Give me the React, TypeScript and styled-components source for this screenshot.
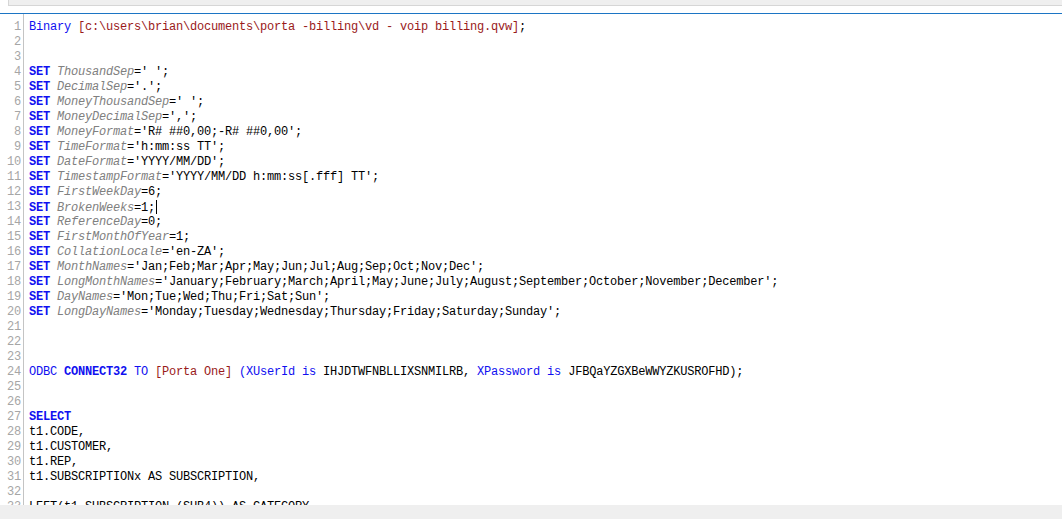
import React from 'react';
import styled, { createGlobalStyle } from 'styled-components';

type Kind = 'kw' | 'fn' | 'var' | 'str' | 'txt';
type Token = [Kind, string];

const GlobalStyle = createGlobalStyle`
  html, body {
    margin: 0;
    padding: 0;
    background: #ffffff;
  }
  #root {
    height: 100vh;
  }
`;

const Page = styled.div`
  display: flex;
  flex-direction: column;
  height: 100vh;
  overflow: hidden;
  background: #ffffff;
`;

const TopStrip = styled.div`
  height: 5px;
  margin-left: 8px;
  background: #efefef;
  border-left: 1px solid #d6d6d6;
  border-bottom: 1px solid #d6d6d6;
`;

const Editor = styled.div`
  flex: 1;
  display: flex;
  margin-top: 7px;
  border-top: 1px solid #1c75c4;
  overflow: hidden;
  font-family: 'Liberation Mono', 'Courier New', monospace;
  font-size: 12px;
  letter-spacing: -0.2px;
  line-height: 15px;
`;

const Gutter = styled.div`
  width: 21px;
  padding: 6px 2px 0 0;
  border-right: 1px solid #c4c4c4;
  color: #a6a6a6;
  text-align: right;
  flex-shrink: 0;
`;

const LineNo = styled.div`
  height: 15px;
`;

const Code = styled.div`
  padding: 6px 0 0 5px;
  flex: 1;
  white-space: pre;
  color: #000000;
`;

const Line = styled.div`
  height: 15px;
`;

const Tok = styled.span<{ $kind: Kind }>`
  color: ${({ $kind }) =>
    $kind === 'kw' || $kind === 'fn'
      ? '#1010f0'
      : $kind === 'var'
      ? '#808080'
      : $kind === 'str'
      ? '#9a1a1a'
      : '#000000'};
  font-weight: ${({ $kind }) => ($kind === 'kw' ? 700 : 400)};
  font-style: ${({ $kind }) => ($kind === 'var' ? 'italic' : 'normal')};
`;

const Caret = styled.span`
  display: inline-block;
  width: 1px;
  height: 14px;
  margin-left: 1px;
  vertical-align: -3px;
  background: #000000;
`;

const BottomStrip = styled.div`
  height: 14px;
  background: #efefef;
  flex-shrink: 0;
`;

const set = (name: string, value: string): Token[] => [
  ['kw', 'SET '],
  ['var', name],
  ['txt', '=' + value + ';'],
];

const lines: Token[][] = [
  [
    ['fn', 'Binary '],
    ['str', '[c:\\users\\brian\\documents\\porta -billing\\vd - voip billing.qvw]'],
    ['txt', ';'],
  ],
  [],
  [],
  set('ThousandSep', "' '"),
  set('DecimalSep', "'.'"),
  set('MoneyThousandSep', "' '"),
  set('MoneyDecimalSep', "','"),
  set('MoneyFormat', "'R# ##0,00;-R# ##0,00'"),
  set('TimeFormat', "'h:mm:ss TT'"),
  set('DateFormat', "'YYYY/MM/DD'"),
  set('TimestampFormat', "'YYYY/MM/DD h:mm:ss[.fff] TT'"),
  set('FirstWeekDay', '6'),
  set('BrokenWeeks', '1'),
  set('ReferenceDay', '0'),
  set('FirstMonthOfYear', '1'),
  set('CollationLocale', "'en-ZA'"),
  set('MonthNames', "'Jan;Feb;Mar;Apr;May;Jun;Jul;Aug;Sep;Oct;Nov;Dec'"),
  set(
    'LongMonthNames',
    "'January;February;March;April;May;June;July;August;September;October;November;December'"
  ),
  set('DayNames', "'Mon;Tue;Wed;Thu;Fri;Sat;Sun'"),
  set('LongDayNames', "'Monday;Tuesday;Wednesday;Thursday;Friday;Saturday;Sunday'"),
  [],
  [],
  [],
  [
    ['fn', 'ODBC '],
    ['kw', 'CONNECT32'],
    ['fn', ' TO '],
    ['str', '[Porta One]'],
    ['fn', ' (XUserId is '],
    ['txt', 'IHJDTWFNBLLIXSNMILRB, '],
    ['fn', 'XPassword is '],
    ['txt', 'JFBQaYZGXBeWWYZKUSROFHD);'],
  ],
  [],
  [],
  [['kw', 'SELECT']],
  [['txt', 't1.CODE,']],
  [['txt', 't1.CUSTOMER,']],
  [['txt', 't1.REP,']],
  [['txt', 't1.SUBSCRIPTIONx AS SUBSCRIPTION,']],
  [],
  [['txt', 'LEFT(t1.SUBSCRIPTION,(SUB4)) AS CATEGORY']],
];

// the text cursor sits at the end of line 13
const CARET_LINE = 12;

const App: React.FC = () => (
  <Page>
    <GlobalStyle />
    <TopStrip />
    <Editor>
      <Gutter>
        {lines.map((_, i) => (
          <LineNo key={i}>{i + 1}</LineNo>
        ))}
      </Gutter>
      <Code>
        {lines.map((tokens, i) => (
          <Line key={i}>
            {tokens.map(([kind, text], j) => (
              <Tok key={j} $kind={kind}>
                {text}
              </Tok>
            ))}
            {i === CARET_LINE && <Caret />}
          </Line>
        ))}
      </Code>
    </Editor>
    <BottomStrip />
  </Page>
);

export default App;
